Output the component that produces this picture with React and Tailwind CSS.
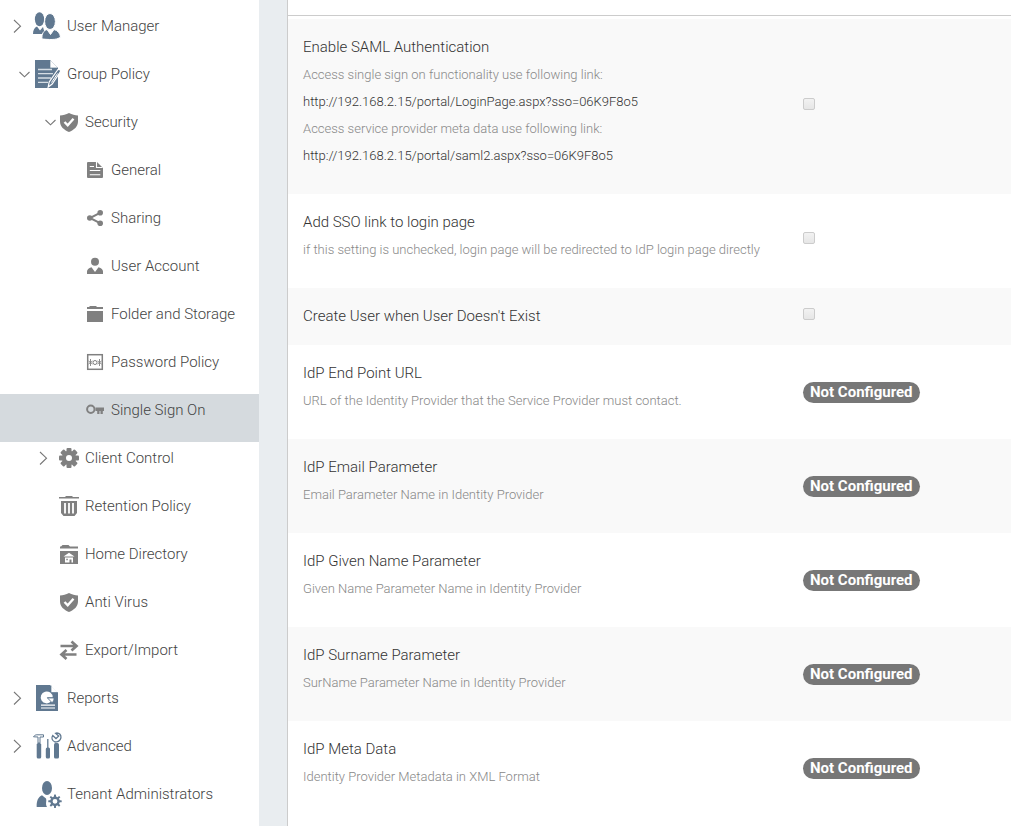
import { useState } from 'react'

const ANGLES = [0, 45, 90, 135, 180, 225, 270, 315]

function Gear({ cx, cy, r, hole, tooth }) {
  return (
    <g>
      {ANGLES.map((a) => (
        <rect
          key={a}
          x={cx - tooth / 2}
          y={cy - r}
          width={tooth}
          height={r / 2}
          rx={tooth / 5}
          transform={`rotate(${a} ${cx} ${cy})`}
        />
      ))}
      <circle cx={cx} cy={cy} r={(r * 0.72 + hole) / 2} fill="none" stroke="currentColor" strokeWidth={r * 0.72 - hole} />
    </g>
  )
}

const icons = {
  users: (
    <>
      <ellipse cx="6.5" cy="9.2" rx="4.6" ry="7" />
      <path d="M0 24c0-4 1.500-6.500 4-7.500l3 4 3-3.500 2 7z" />
      <g stroke="#fff" strokeWidth="1">
        <ellipse cx="17" cy="11.500" rx="5.400" ry="8" />
        <path d="M9 29c-.5-5 1.500-8.500 5-9.500l3.500 5 3.500-5c4 1 6 4 6.500 7.500-3 2.500-7 3-18.500 2z" />
      </g>
    </>
  ),
  policy: (
    <>
      <path d="M2 2h15l8 8v20H2z" />
      <path d="M17 2v8h8" fill="#fff" stroke="#607890" strokeWidth=".7" />
      <path d="M5 11.500h14M5 15.700h15M5 20h13M5 24.300h10" stroke="#d5dde4" strokeWidth="1.300" />
      <path d="M26.500 11.500c1 .5 1.200 1.500.7 2.500l-8 12-4 3 1-5 8-11.500c.6-1 1.500-1.300 2.300-1z" stroke="#fff" strokeWidth="1.200" />
      <path d="M24.500 15.500l-6 9" stroke="#fff" strokeWidth="1" />
    </>
  ),
  reports: (
    <>
      <path d="M3 3h14l8 8v18H3z" />
      <path d="M18 3.500v7h7" fill="#fff" stroke="#607890" strokeWidth=".7" />
      <path d="M13.700 15.300l4.300 4.300a6 6 0 1 1 1.700-4.300z" fill="#fff" />
      <path d="M14.500 16h6.500c0 2-.7 3.500-2 4.600z" fill="#fff" stroke="#607890" strokeWidth=".8" />
      <path d="M8 23.200h14M8 26h14" stroke="#fff" strokeWidth="1.200" />
    </>
  ),
  tools: (
    <>
      <path d="M.5 6.800C2 4.500 3.500 4.800 5 4.800h5.500V7H7v6H5V7z" fill="none" stroke="currentColor" strokeWidth="1" />
      <rect x="3.700" y="13" width="4.500" height="15.500" rx="1.500" />
      <path d="M14.800 9v9" stroke="currentColor" strokeWidth="1.300" />
      <rect x="12.800" y="17.500" width="4.200" height="11" rx="1.500" />
      <path
        d="M22 12c-3-1.500-4-4-2.300-6.500l3.300 3 2.700-2.500-3.200-2.700c2-.8 4.500.2 5.300 2.500.7 2.500-1 5.500-4 6z"
        fill="none"
        stroke="currentColor"
        strokeWidth="1.300"
      />
      <rect x="21" y="13" width="5" height="15.500" rx="1.500" />
    </>
  ),
  admin: (
    <>
      <ellipse cx="14" cy="10" rx="5" ry="7" />
      <path d="M3.700 29c-.3-6 1.300-10 5.300-11.800l4 3.300c1 3-1 5 1 8.500z" />
      <Gear cx={22} cy={23.300} r={6.700} hole={2.400} tooth={2} />
    </>
  ),
  shield: (
    <>
      <path d="M10 1c3 1.500 6 2.300 9 2.500v6c0 5-4 8.500-9 10.500C5 18 1 14.500 1 9.500v-6C4 3.300 7 2.500 10 1z" />
      <path d="M5.500 10l3.200 3.300L14.500 6.800" fill="none" stroke="#fff" strokeWidth="2.400" />
    </>
  ),
  general: (
    <>
      <path d="M3 2h9l6 6v9a1 1 0 0 1-1 1H3a1 1 0 0 1-1-1V3a1 1 0 0 1 1-1z" />
      <path d="M11.500 2v5.500h6M4.800 6.500H9M4.800 10.500h10.500M4.800 14.700h10.500" fill="none" stroke="#fff" strokeWidth="1.100" />
    </>
  ),
  share: (
    <>
      <path d="M15 4.800L5 10l10 5.200" fill="none" stroke="currentColor" strokeWidth="2" />
      <circle cx="4.800" cy="10" r="2.800" />
      <circle cx="15.200" cy="4.800" r="2.800" />
      <circle cx="15.200" cy="15.200" r="2.800" />
    </>
  ),
  account: (
    <>
      <circle cx="10" cy="5.800" r="4" />
      <path d="M2 18v-2.500c0-2 1.500-3.500 4.500-4.300L10 16l3.500-4.800c3 .8 4.500 2.300 4.500 4.300V18z" />
    </>
  ),
  folder: <path d="M2 3h2l1-1h6l1 1h6v2H2zM2 7h16v11H2z" />,
  password: (
    <>
      <rect x="2.700" y="2.700" width="14.600" height="14.600" fill="none" stroke="currentColor" strokeWidth="1.500" />
      <path d="M5.500 7v7M3.500 9l4 3M7.500 9l-4 3M14.500 7v7M12.500 9l4 3M16.500 9l-4 3" stroke="currentColor" strokeWidth=".9" />
      <circle cx="10" cy="10.500" r="2" fill="none" stroke="currentColor" strokeWidth="1" />
    </>
  ),
  key: (
    <>
      <circle cx="5.800" cy="9.300" r="3.700" fill="none" stroke="currentColor" strokeWidth="2" />
      <path d="M10.500 7.500H19V11h-1.200v3h-2.300v-3h-1v3h-2.300v-3h-1.700z" />
    </>
  ),
  gear: <Gear cx={10} cy={10} r={10} hole={3} tooth={5} />,
  trash: (
    <>
      <path d="M0 1h6l1-1h6l1 1h6v1.500H0zM2 5h16v12l-2.500 3h-11L2 17z" />
      <path d="M6 7v10.500M10 7v10.500M14 7v10.500" stroke="#fff" strokeWidth="1.800" />
    </>
  ),
  home: (
    <>
      <path d="M1 2.500h1L3.500 1h6L11 2.500h8v2H1zM1 7h18v13H1z" />
      <path d="M10 8.700l5.500 3.800h-11zM6 13.500h8v5h-1.500v-3h-2v3H6z" fill="#fff" />
      <path d="M7.300 14.800h1.500v1.500H7.300z" />
    </>
  ),
  arrows: (
    <path
      d="M1.500 6h15.500M12.500 1.500L17.500 6l-5 4.500M17.500 14.500H3M7.500 10l-5 4.500 5 4.500"
      fill="none"
      stroke="currentColor"
      strokeWidth="2.700"
    />
  ),
}

const menu = [
  { label: 'User Manager', icon: 'users', level: 0, open: false },
  { label: 'Group Policy', icon: 'policy', level: 0, open: true },
  { label: 'Security', icon: 'shield', level: 1, open: true },
  { label: 'General', icon: 'general', level: 2 },
  { label: 'Sharing', icon: 'share', level: 2 },
  { label: 'User Account', icon: 'account', level: 2 },
  { label: 'Folder and Storage', icon: 'folder', level: 2 },
  { label: 'Password Policy', icon: 'password', level: 2 },
  { label: 'Single Sign On', icon: 'key', level: 2 },
  { label: 'Client Control', icon: 'gear', level: 1, open: false },
  { label: 'Retention Policy', icon: 'trash', level: 1 },
  { label: 'Home Directory', icon: 'home', level: 1 },
  { label: 'Anti Virus', icon: 'shield', level: 1 },
  { label: 'Export/Import', icon: 'arrows', level: 1 },
  { label: 'Reports', icon: 'reports', level: 0, open: false },
  { label: 'Advanced', icon: 'tools', level: 0, open: false },
  { label: 'Tenant Administrators', icon: 'admin', level: 0 },
]

const indents = ['pl-2.5', 'pl-9', 'pl-[62px]']

const settings = [
  {
    id: 'saml',
    title: 'Enable SAML Authentication',
    lines: [
      { text: 'Access single sign on functionality use following link:' },
      { text: 'http://192.168.2.15/portal/LoginPage.aspx?sso=06K9F8o5', link: true },
      { text: 'Access service provider meta data use following link:' },
      { text: 'http://192.168.2.15/portal/saml2.aspx?sso=06K9F8o5', link: true },
    ],
    checkbox: true,
  },
  {
    id: 'sso-link',
    title: 'Add SSO link to login page',
    lines: [{ text: 'if this setting is unchecked, login page will be redirected to IdP login page directly' }],
    checkbox: true,
  },
  { id: 'create-user', title: "Create User when User Doesn't Exist", lines: [], checkbox: true },
  {
    id: 'endpoint',
    title: 'IdP End Point URL',
    lines: [{ text: 'URL of the Identity Provider that the Service Provider must contact.' }],
  },
  { id: 'email', title: 'IdP Email Parameter', lines: [{ text: 'Email Parameter Name in Identity Provider' }] },
  {
    id: 'given-name',
    title: 'IdP Given Name Parameter',
    lines: [{ text: 'Given Name Parameter Name in Identity Provider' }],
  },
  { id: 'surname', title: 'IdP Surname Parameter', lines: [{ text: 'SurName Parameter Name in Identity Provider' }] },
  { id: 'metadata', title: 'IdP Meta Data', lines: [{ text: 'Identity Provider Metadata in XML Format' }] },
]

function Chevron({ open }) {
  return (
    <svg width="14" height="14" viewBox="0 0 14 14" fill="none" stroke="#777" strokeWidth="1.1">
      <path d={open ? 'M2.500 5L7.500 9.800 12.500 5' : 'M4 1l6.500 6.200L4 13.500'} />
    </svg>
  )
}

function MenuItem({ item, selected, onSelect }) {
  const top = item.level === 0
  return (
    <li className={selected ? 'bg-[#d5dade]' : ''}>
      <button
        type="button"
        onClick={onSelect}
        className={`flex h-12 w-full items-start text-left ${indents[item.level]}`}
      >
        <span className={`flex h-8 w-[23px] shrink-0 items-center pr-0.5 ${item.open ? 'justify-end' : ''}`}>
          {item.open !== undefined && <Chevron open={item.open} />}
        </span>
        <span className="flex h-8 shrink-0 items-center">
          {top ? (
            <svg width="28" height="32" viewBox="0 0 28 32" fill="currentColor" className="overflow-visible text-[#607890]">
              {icons[item.icon]}
            </svg>
          ) : (
            <svg width="20" height="20" viewBox="0 0 20 20" fill="currentColor" className="overflow-visible text-[#808080]">
              {icons[item.icon]}
            </svg>
          )}
        </span>
        <span className="pl-1.5 text-[15px] leading-8 whitespace-nowrap">{item.label}</span>
      </button>
    </li>
  )
}

function SettingRow({ setting }) {
  return (
    <div className="grid grid-cols-[minmax(0,500px)_1fr] items-center odd:bg-[#f9f9f9]">
      <div className="p-[15px]">
        <label htmlFor={setting.id} className="block text-[15px] leading-[27px] text-[#333]">
          {setting.title}
        </label>
        {setting.lines.length > 0 && (
          <div className="mb-2.5 text-[13px] leading-[27px] text-[#888]">
            {setting.lines.map((line) =>
              line.link ? (
                <a key={line.text} href={line.text} className="block text-[#333]">
                  {line.text}
                </a>
              ) : (
                <p key={line.text}>{line.text}</p>
              )
            )}
          </div>
        )}
      </div>
      <div className="flex px-[15px]">
        {setting.checkbox ? (
          <input
            id={setting.id}
            type="checkbox"
            className="mb-1.5 size-3 appearance-none rounded-[2px] border border-[#ccc] bg-linear-to-b from-[#f2f2f2] to-[#e6e6e6] checked:bg-[#777]"
          />
        ) : (
          <button
            id={setting.id}
            type="button"
            className="rounded-full bg-[#777] px-[7px] text-[15px] leading-[21px] font-bold whitespace-nowrap text-white"
          >
            Not Configured
          </button>
        )}
      </div>
    </div>
  )
}

export default function App() {
  const [selected, setSelected] = useState('Single Sign On')

  return (
    <div className="flex min-h-screen bg-white font-['Roboto',sans-serif] font-light text-[#444]">
      <nav className="w-[259px] shrink-0 pt-2.5">
        <ul>
          {menu.map((item) => (
            <MenuItem
              key={item.label}
              item={item}
              selected={selected === item.label}
              onSelect={() => setSelected(item.label)}
            />
          ))}
        </ul>
      </nav>
      <div className="w-7 shrink-0 bg-[#e9edf0]" />
      <main className="min-w-0 flex-1 border-l border-[#ccc]">
        <div className="h-4 border-b border-[#ccc]" />
        <div className="pt-[3px]">
          {settings.map((setting) => (
            <SettingRow key={setting.id} setting={setting} />
          ))}
        </div>
      </main>
    </div>
  )
}
